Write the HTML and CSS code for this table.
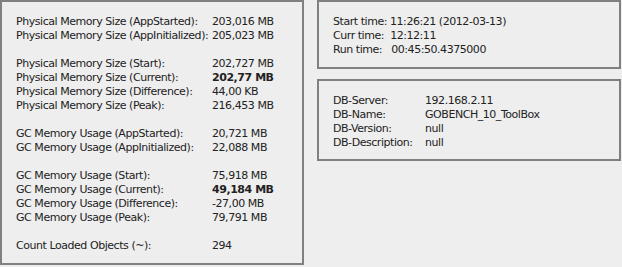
FILE: index.html
```html
<!DOCTYPE html>
<html lang="en">
<head>
    <meta charset="UTF-8">
    <title>Memory Status</title>
    <link rel="stylesheet" href="styles.css">
</head>
<body>
    <div class="page">
        <div class="panel memory-panel">
            <div class="group">
                <span>Physical Memory Size (AppStarted):</span><span>203,016 MB</span>
                <span>Physical Memory Size (AppInitialized):</span><span>205,023 MB</span>
            </div>
            <div class="group">
                <span>Physical Memory Size (Start):</span><span>202,727 MB</span>
                <span>Physical Memory Size (Current):</span><span class="strong">202,77 MB</span>
                <span>Physical Memory Size (Difference):</span><span>44,00 KB</span>
                <span>Physical Memory Size (Peak):</span><span>216,453 MB</span>
            </div>
            <div class="group">
                <span>GC Memory Usage (AppStarted):</span><span>20,721 MB</span>
                <span>GC Memory Usage (AppInitialized):</span><span>22,088 MB</span>
            </div>
            <div class="group">
                <span>GC Memory Usage (Start):</span><span>75,918 MB</span>
                <span>GC Memory Usage (Current):</span><span class="strong">49,184 MB</span>
                <span>GC Memory Usage (Difference):</span><span>-27,00 MB</span>
                <span>GC Memory Usage (Peak):</span><span>79,791 MB</span>
            </div>
            <div class="group">
                <span>Count Loaded Objects (~):</span><span>294</span>
            </div>
        </div>
        <div class="side">
            <div class="panel time-panel">
                <div>Start time:&nbsp;11:26:21 (2012-03-13)</div>
                <div>Curr time:&nbsp;&nbsp;12:12:11</div>
                <div>Run time:&nbsp;&nbsp;&nbsp;00:45:50.4375000</div>
            </div>
            <div class="panel db-panel">
                <div class="group">
                    <span>DB-Server:</span><span>192.168.2.11</span>
                    <span>DB-Name:</span><span>GOBENCH_10_ToolBox</span>
                    <span>DB-Version:</span><span>null</span>
                    <span>DB-Description:</span><span>null</span>
                </div>
            </div>
        </div>
    </div>
</body>
</html>
```

FILE: styles.css
```css
body {
    margin: 0;
    background: #eeeeee;
    font-family: "DejaVu Sans", Verdana, sans-serif;
    font-size: 11px;
    letter-spacing: -0.45px;
    line-height: 14px;
    color: #222;
}
.page { display: flex; gap: 13px; align-items: flex-start; }
.panel {
    box-sizing: border-box;
    border: 2px solid #808080;
    background: #eeeeee;
    padding: 13px 0 0 14px;
}
.memory-panel { width: 304px; height: 265px; }
.memory-panel .group { display: grid; grid-template-columns: 196px auto; white-space: nowrap; }
.memory-panel .group + .group { margin-top: 14px; }
.side { display: flex; flex-direction: column; gap: 10px; }
.time-panel { width: 304px; height: 69px; white-space: nowrap; }
.db-panel { width: 304px; height: 82px; }
.db-panel .group { display: grid; grid-template-columns: 92px auto; white-space: nowrap; }
.strong { font-weight: bold; }
```
